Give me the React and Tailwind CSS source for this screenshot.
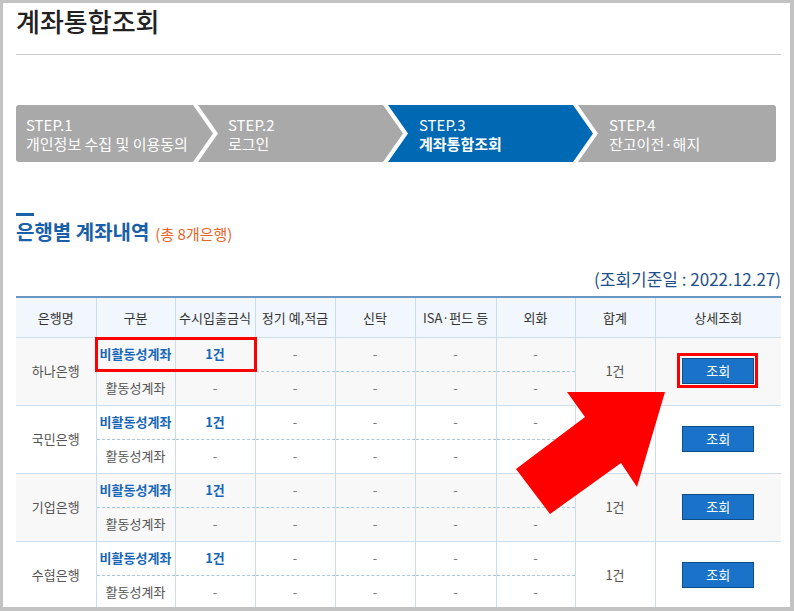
import React from 'react';

const font = { fontFamily: '"Noto Sans CJK KR", "Noto Sans", sans-serif' };

const banks = ['하나은행', '국민은행', '기업은행', '수협은행'];

const Steps = () => (
  <div className="flex mt-[50px] h-[57px] text-white text-[15px] leading-[19px]">
    <div className="w-[197px] h-full bg-[#a9a9a9] rounded-l-[3px] pl-[10px] pt-[10px] [clip-path:polygon(0_0,177px_0,100%_50%,177px_100%,0_100%)]">
      <div>STEP.1</div>
      <div>개인정보 수집 및 이용동의</div>
    </div>
    <div className="-ml-[15px] w-[205px] h-full bg-[#a9a9a9] pl-[30px] pt-[10px] [clip-path:polygon(0_0,185px_0,100%_50%,185px_100%,0_100%,20px_50%)]">
      <div>STEP.2</div>
      <div>로그인</div>
    </div>
    <div className="-ml-[15px] w-[205px] h-full bg-[#0069b4] pl-[31px] pt-[10px] [clip-path:polygon(0_0,185px_0,100%_50%,185px_100%,0_100%,20px_50%)]">
      <div>STEP.3</div>
      <div className="font-bold">계좌통합조회</div>
    </div>
    <div className="-ml-[15px] w-[198px] h-full bg-[#a9a9a9] rounded-r-[3px] pl-[31px] pt-[10px] [clip-path:polygon(0_0,100%_0,100%_100%,0_100%,20px_50%)]">
      <div>STEP.4</div>
      <div>잔고이전·해지</div>
    </div>
  </div>
);

const th = 'border border-[#c9ddec] border-t-2 border-t-[#6a97c1] bg-[#f1f7fc] font-normal text-[#333] text-[13px] p-0';
const tdTop = 'border border-[#c9ddec] [border-bottom-style:dashed] border-b-[#a9c9de] p-0 text-center';
const tdBot = 'border border-[#c9ddec] border-t-0 p-0 text-center';
const tdSpan = 'border border-[#c9ddec] p-0 text-center';

const BankTable = () => (
  <div className="relative mt-[5px]">
    <table className="table-fixed border-collapse w-[765px] text-[13px]">
      <colgroup>
        <col className="w-[80px]" />
        <col className="w-[79px]" />
        <col className="w-[80px]" />
        <col className="w-[80px]" />
        <col className="w-[80px]" />
        <col className="w-[81px]" />
        <col className="w-[79px]" />
        <col className="w-[80px]" />
        <col className="w-[126px]" />
      </colgroup>
      <thead>
        <tr className="h-[40px]">
          {['은행명', '구분', '수시입출금식', '정기 예,적금', '신탁', 'ISA·펀드 등', '외화', '합계', '상세조회'].map((h) => (
            <th key={h} className={th + ' first:border-l-0 last:border-r-0'}>{h}</th>
          ))}
        </tr>
      </thead>
      <tbody>
        {banks.map((b, i) => (
          <React.Fragment key={b}>
            <tr className={'h-[34px] ' + (i % 2 === 0 ? 'bg-[#f8f8f8]' : 'bg-white')}>
              <td rowSpan={2} className={tdSpan + ' border-l-0 text-[#555]'}>{b}</td>
              <td className={tdTop + ' text-[#1666b8] font-bold'}>비활동성계좌</td>
              <td className={tdTop + ' text-[#1666b8] font-bold'}>1건</td>
              <td className={tdTop + ' text-[#777]'}>-</td>
              <td className={tdTop + ' text-[#777]'}>-</td>
              <td className={tdTop + ' text-[#777]'}>-</td>
              <td className={tdTop + ' text-[#777]'}>-</td>
              <td rowSpan={2} className={tdSpan + ' text-[#555]'}>1건</td>
              <td rowSpan={2} className={tdSpan + ' border-r-0'}>
                <button className="w-[72px] h-[26px] bg-[#1a73c9] border border-[#0d4d8a] text-white text-[13px]">조회</button>
              </td>
            </tr>
            <tr className={'h-[34px] ' + (i % 2 === 0 ? 'bg-[#f8f8f8]' : 'bg-white')}>
              <td className={tdBot + ' text-[#555]'}>활동성계좌</td>
              <td className={tdBot + ' text-[#777]'}>-</td>
              <td className={tdBot + ' text-[#777]'}>-</td>
              <td className={tdBot + ' text-[#777]'}>-</td>
              <td className={tdBot + ' text-[#777]'}>-</td>
              <td className={tdBot + ' text-[#777]'}>-</td>
            </tr>
          </React.Fragment>
        ))}
      </tbody>
    </table>
    <div className="absolute left-[79px] top-[41px] w-[162px] h-[35px] border-[3px] border-[#ff0000]" />
    <div className="absolute left-[661px] top-[57px] w-[81px] h-[35px] border-[3px] border-[#ff0000]" />
  </div>
);

export default function App() {
  return (
    <div style={font} className="relative w-[794px] h-[611px] overflow-hidden bg-white border-t-[3px] border-l-[3px] border-r-4 border-b-4 border-[#c3c3c3]">
      <div className="pl-[13px] pr-[9px]">
        <h1 className="pt-[1px] text-[26px] leading-[34px] text-[#222] font-medium">계좌통합조회</h1>
        <div className="mt-[16px] h-px bg-[#cccccc]" />
        <Steps />
        <div className="mt-[51px] w-[18px] h-[3px] bg-[#1a5fa8]" />
        <div className="mt-[2px] flex items-baseline leading-[28px]">
          <span className="text-[20px] font-bold text-[#1a5fa8]">은행별 계좌내역</span>
          <span className="ml-[6px] text-[15px] text-[#e4652a]">(총 8개은행)</span>
        </div>
        <div className="mt-[18px] text-right text-[17px] leading-[25px] text-[#1f4f8a]">(조회기준일 : 2022.12.27)</div>
        <BankTable />
      </div>
      <svg className="absolute -left-[3px] -top-[3px] pointer-events-none" width="794" height="611" viewBox="0 0 794 611">
        <polygon points="567,392 665,392 637,487 621,463 550,514 516,469 585,417" fill="#ff0000" />
      </svg>
    </div>
  );
}
